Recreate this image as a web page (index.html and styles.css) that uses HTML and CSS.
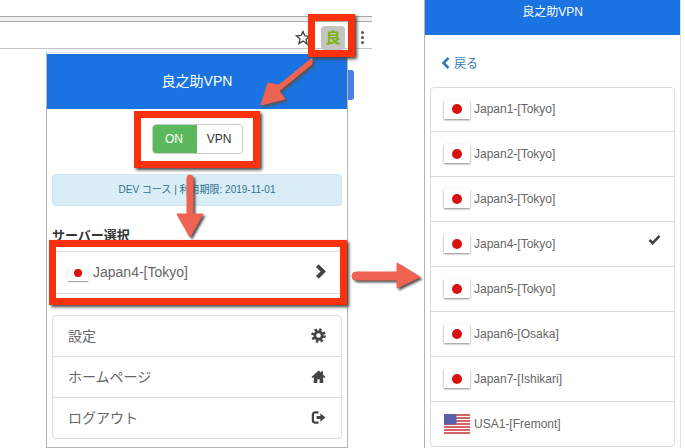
FILE: index.html
```html
<!DOCTYPE html>
<html lang="en">
<head>
  <meta charset="UTF-8" />
  <title>良之助VPN</title>
  <link rel="stylesheet" href="styles.css">
</head>
<body>
  <div class="stage">
    <!-- browser toolbar -->
    <div class="toolbar">
      <svg class="star" width="16" height="16" viewBox="0 0 16 16"><path d="M8 1.5l1.900 4.400 4.700.4-3.600 3.100 1.100 4.700L8 11.100l-4.100 2.500L5 8.900 1.400 5.800l4.700-.4z" fill="#fff" stroke="#444" stroke-width="1.300"/></svg>
      <div class="ext-icon">良</div>
      <div class="dots"><i></i><i></i><i></i></div>
    </div>
    <div class="peek"></div>

    <!-- main popup -->
    <div class="popup popup-main">
      <header class="popup-head main-head">良之助VPN</header>
      <div class="toggle-row">
        <div class="toggle"><span class="toggle-on">ON</span><span class="toggle-label">VPN</span></div>
      </div>
      <div class="notice">DEV コース | 利用期限: 2019-11-01</div>
      <h4 class="select-title">サーバー選択</h4>
      <div class="current">
        <span class="flag flag-small"><i></i></span>
        <span class="current-name">Japan4-[Tokyo]</span>
        <svg class="icon chev" viewBox="0 0 12 14"><path d="M3 1.500l5.500 5.500-5.500 5.500" fill="none" stroke="#444" stroke-width="3.600"/></svg>
      </div>
      <ul class="menu">
        <li>設定
          <svg class="icon" viewBox="0 0 16 16">
            <circle cx="8" cy="8" r="6.300" fill="none" stroke="#444" stroke-width="3" stroke-dasharray="2.500 2.450"/>
            <circle cx="8" cy="8" r="4" fill="none" stroke="#444" stroke-width="3"/>
          </svg>
        </li>
        <li>ホームページ
          <svg class="icon" viewBox="0 0 16 16"><path fill="#444" d="M8 1.500L.5 8.500 1.500 9.700 3 8.400V15h3.800v-4h2.400v4H13V8.400l1.500 1.300 1-1.200-2.800-2.600V2.500h-2v1.300z"/></svg>
        </li>
        <li>ログアウト
          <svg class="icon" viewBox="0 0 16 16"><path fill="none" stroke="#444" stroke-width="2.400" d="M8 2.500H4.500a2.500 2.500 0 0 0-2.500 2.500v6a2.500 2.500 0 0 0 2.500 2.500H8"/><path fill="#444" d="M6 6.500h4V3.500L15.500 8 10 12.500v-3H6z"/></svg>
        </li>
      </ul>
    </div>

    <!-- server list popup -->
    <div class="popup popup-list">
      <header class="popup-head list-head">良之助VPN</header>
      <a class="back">
        <svg class="back-icon" viewBox="0 0 10 12"><path d="M7.500 1L2.500 6l5 5" fill="none" stroke="#337ab7" stroke-width="2.600"/></svg>戻る
      </a>
      <ul class="servers">
        <li><span class="flag"><i></i></span>Japan1-[Tokyo]</li>
        <li><span class="flag"><i></i></span>Japan2-[Tokyo]</li>
        <li><span class="flag"><i></i></span>Japan3-[Tokyo]</li>
        <li><span class="flag"><i></i></span>Japan4-[Tokyo]
          <svg class="check" viewBox="0 0 14 12"><path d="M1.500 6.500l3.500 3.500 7.500-8" fill="none" stroke="#444" stroke-width="2.800"/></svg>
        </li>
        <li><span class="flag"><i></i></span>Japan5-[Tokyo]</li>
        <li><span class="flag"><i></i></span>Japan6-[Osaka]</li>
        <li><span class="flag"><i></i></span>Japan7-[Ishikari]</li>
        <li>
          <svg class="flag-us" viewBox="0 0 26 20">
            <rect width="26" height="20" fill="#fff"/>
            <path d="M0 1h26M0 4h26M0 7h26M0 10h26M0 13h26M0 16h26M0 19h26" stroke="#c8313a" stroke-width="1.600"/>
            <rect width="12.500" height="10.500" fill="#5a5fa8"/>
          </svg>USA1-[Fremont]
        </li>
      </ul>
    </div>

    <!-- annotations on top of the screenshot -->
    <div class="mark mark-ext"></div>
    <div class="mark mark-toggle"></div>
    <div class="mark mark-select"></div>
    <svg class="arrows" width="685" height="448" viewBox="0 0 685 448">
      <g fill="#ee6352" stroke="#ee6352" stroke-linejoin="round">
        <path d="M312 58L279 85l-11-2-7 22 24-6-6-8 33-27z" stroke-width="1"/>
        <path d="M187 178a3 3 0 0 1 6 0v36h10l-13 23-13-23h10z" stroke-width="1"/>
        <path d="M356 272h41v-9l23 14-23 11v-8h-41a4 4 0 0 1 0-8z" stroke-width="1"/>
      </g>
    </svg>
  </div>
</body>
</html>
```

FILE: styles.css
```css
* {
  box-sizing: border-box;
}

body {
  margin: 0;
  font-family: "Liberation Sans", "Noto Sans CJK JP", sans-serif;
  color: #666;
  background: #fff;
}

ul {
  list-style: none;
  margin: 0;
  padding: 0;
}

.stage {
  position: relative;
  width: 685px;
  height: 448px;
  overflow: hidden;
}

/* browser toolbar */
.toolbar {
  position: absolute;
  top: 16px;
  left: 0;
  width: 372px;
  height: 33px;
  border-top: 1px solid #a8a8a8;
  border-bottom: 1px solid #c4c4c4;
  display: flex;
  align-items: center;
  justify-content: flex-end;
  background: linear-gradient(#f1f1f1 4px, #aaa 4px, #aaa 5px, #fff 5px);
  padding-top: 5px;
}

.star {
  margin-right: 10px;
  margin-top: 6px;
}

.ext-icon {
  width: 24px;
  height: 24px;
  margin-right: 16px;
  margin-top: 5px;
  background: #c4c4c4;
  border-radius: 4px;
  color: #7cb305;
  font-size: 15px;
  font-weight: bold;
  line-height: 24px;
  text-align: center;
}

.dots {
  display: flex;
  flex-direction: column;
  gap: 2px;
  margin-right: 8px;
  margin-top: 5px;
}

.dots i {
  width: 3px;
  height: 3px;
  background: #555;
  border-radius: 50%;
}

.peek {
  position: absolute;
  left: 340px;
  top: 70px;
  width: 14px;
  height: 30px;
  background: #4a7ee8;
  border-radius: 3px;
}

/* popups */
.popup {
  position: absolute;
  background: #fff;
}

.popup-main {
  left: 46px;
  top: 52px;
  width: 302px;
  height: 396px;
  border: 1px solid #b5b5b5;
  border-top-color: #e4e4e4;
  padding-top: 1px;
}

.popup-list {
  left: 424px;
  top: 0;
  width: 257px;
  height: 448px;
  border-left: 1px solid #b5b5b5;
  border-right: 1px solid #e0e0e0;
}

.popup-head {
  background: #1a73e0;
  color: #fff;
  text-align: center;
}

.main-head {
  height: 55px;
  line-height: 55px;
  font-size: 14px;
}

.list-head {
  height: 35px;
  line-height: 24px;
  font-size: 12px;
}

.toggle-row {
  display: flex;
  justify-content: center;
  padding-top: 15px;
}

.toggle {
  display: flex;
  width: 91px;
  height: 30px;
  border: 1px solid #ccc;
  border-radius: 4px;
  overflow: hidden;
  font-size: 12px;
  line-height: 28px;
  text-align: center;
}

.toggle-on {
  width: 45px;
  margin: -1px 0 -1px -1px;
  line-height: 30px;
  background: #5cb85c;
  color: #fff;
}

.toggle-label {
  flex: 1;
  color: #333;
}

.notice {
  margin: 20px 5px 0;
  height: 32px;
  line-height: 30px;
  background: #d9edf7;
  border: 1px solid #cfe6f3;
  border-radius: 4px;
  color: #31708f;
  font-size: 10px;
  text-align: center;
}

.select-title {
  margin: 23px 5px 0;
  height: 22px;
  color: #333;
  font-size: 13px;
  font-weight: bold;
  line-height: 14px;
}

.current {
  display: flex;
  align-items: center;
  margin: 0 5px;
  height: 43px;
  border: 1px solid #ddd;
  padding: 0 15px;
  font-size: 14px;
}

.current-name {
  flex: 1;
  margin-left: 5px;
  margin-top: -2px;
}

.flag {
  display: flex;
  align-items: center;
  justify-content: center;
  flex: none;
  width: 26px;
  height: 19px;
  margin-right: 4px;
  background: #fff;
  box-shadow: 0 1px 2px #888;
}

.flag i {
  width: 10px;
  height: 10px;
  background: #d8100f;
  border-radius: 50%;
}

.flag-small {
  width: 20px;
  height: 16px;
  margin-right: 0;
  box-shadow: 0 1px 1px #aaa;
}

.flag-small i {
  width: 8px;
  height: 8px;
}

.flag-us {
  flex: none;
  width: 26px;
  height: 20px;
  margin-right: 4px;
}

.icon {
  flex: none;
  width: 15px;
  height: 15px;
}

.chev {
  margin-top: -3px;
  margin-right: -2px;
}

.menu {
  margin: 21px 5px 0;
  border: 1px solid #ddd;
  border-radius: 4px;
}

.menu li {
  display: flex;
  align-items: center;
  justify-content: space-between;
  height: 41px;
  padding: 0 15px 2px;
  font-size: 14px;
  border-top: 1px solid #ddd;
}

.menu li:first-child {
  border-top: none;
  height: 40px;
}

.back {
  display: flex;
  align-items: center;
  height: 52px;
  padding: 3px 0 0 16px;
  color: #337ab7;
  font-size: 12px;
}

.back-icon {
  width: 10px;
  height: 12px;
  margin-right: 3px;
}

.servers {
  margin: 0 5px;
  border: 1px solid #ddd;
  border-radius: 4px;
}

.servers li {
  position: relative;
  display: flex;
  align-items: center;
  height: 45px;
  padding: 0 13px 1px;
  font-size: 12px;
  border-top: 1px solid #ddd;
}

.servers li:first-child {
  border-top: none;
  height: 43px;
}

.check {
  position: absolute;
  right: 13px;
  top: 12px;
  width: 13px;
  height: 11px;
}

/* red annotation boxes */
.mark {
  position: absolute;
  border: 7px solid #f9310c;
  box-shadow: 2px 2px 3px #444;
}

.mark-ext {
  left: 308px;
  top: 14px;
  width: 47px;
  height: 43px;
}

.mark-toggle {
  left: 134px;
  top: 111px;
  width: 126px;
  height: 57px;
}

.mark-select {
  left: 49px;
  top: 240px;
  width: 298px;
  height: 65px;
}

.arrows {
  position: absolute;
  left: 0;
  top: 0;
  filter: drop-shadow(2px 2px 1px #555);
}
```
